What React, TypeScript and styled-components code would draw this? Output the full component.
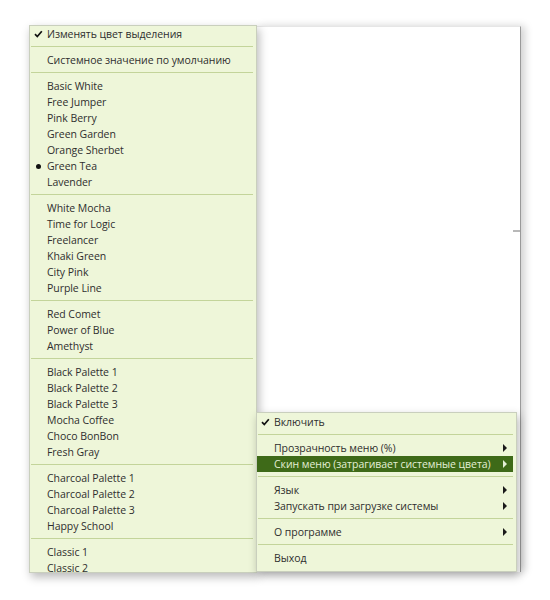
import React from "react";
import styled, { createGlobalStyle } from "styled-components";

const GlobalStyle = createGlobalStyle`
  html, body {
    margin: 0;
    padding: 0;
    background: #ffffff;
  }
  body {
    font-family: "Open Sans", "Noto Sans", sans-serif;
  }
`;

const Desktop = styled.div`
  position: relative;
  width: 550px;
  height: 600px;
  overflow: hidden;
  background: #ffffff;
`;

const AppWindow = styled.div`
  position: absolute;
  left: 256px;
  top: 26px;
  width: 265px;
  height: 546px;
  background: #ffffff;
  border-left: 1px solid #5a5a5a;
  border-right: 1px solid #9a9a9a;
  border-top: 1px solid #e6e6e6;
  box-shadow: 4px 0 8px rgba(0, 0, 0, 0.18);
  display: flex;
  flex-direction: column;
  align-items: flex-end;
  padding-top: 203px;
  box-sizing: border-box;
`;

const ScrollTick = styled.div`
  width: 7px;
  height: 2px;
  background: #b8b8b8;
`;

const MenuPanel = styled.div<{ $left: number; $top: number; $width: number; $height: number; $pad?: number }>`
  position: absolute;
  left: ${(p) => p.$left}px;
  top: ${(p) => p.$top}px;
  width: ${(p) => p.$width}px;
  height: ${(p) => p.$height}px;
  padding-top: ${(p) => p.$pad ?? 0}px;
  box-sizing: border-box;
  background: #eef6d9;
  border: 1px solid #c9cfbd;
  box-shadow: 2px 4px 9px rgba(0, 0, 0, 0.28);
  overflow: hidden;
  display: flex;
  flex-direction: column;
`;

const Item = styled.div<{ $active?: boolean }>`
  flex: none;
  display: flex;
  align-items: center;
  height: 16px;
  line-height: 16px;
  padding-left: 4px;
  margin-right: 3px;
  font-size: 10.5px;
  letter-spacing: -0.05px;
  color: ${(p) => (p.$active ? "#e4efd6" : "#2e2e2e")};
  background: ${(p) => (p.$active ? "#3e6a18" : "transparent")};
  white-space: nowrap;
`;

const Separator = styled.div`
  flex: none;
  height: 1px;
  margin: 4px 3px 5px 1px;
  background: #c3d49a;
`;

const Mark = styled.span`
  flex: none;
  width: 13px;
  display: flex;
  align-items: center;
`;

const Bullet = styled.span`
  display: block;
  width: 5px;
  height: 5px;
  margin-left: 2px;
  border-radius: 50%;
  background: #111;
`;

const Arrow = styled.span<{ $light?: boolean }>`
  flex: none;
  margin-left: auto;
  margin-right: 6px;
  width: 0;
  height: 0;
  border-top: 4px solid transparent;
  border-bottom: 4px solid transparent;
  border-left: 4px solid ${(p) => (p.$light ? "#e4efd6" : "#1a1a1a")};
`;

const Check = () => (
  <svg width="9" height="8" viewBox="0 0 9 8">
    <path d="M1 4.2 L3.3 6.6 L7.8 1.2" fill="none" stroke="#111" strokeWidth="1.7" />
  </svg>
);

type Entry =
  | { sep: true }
  | { label: string; mark?: "check" | "bullet"; sub?: boolean; active?: boolean };

const skins: Entry[] = [
  { label: "Изменять цвет выделения", mark: "check" },
  { sep: true },
  { label: "Системное значение по умолчанию" },
  { sep: true },
  { label: "Basic White" },
  { label: "Free Jumper" },
  { label: "Pink Berry" },
  { label: "Green Garden" },
  { label: "Orange Sherbet" },
  { label: "Green Tea", mark: "bullet" },
  { label: "Lavender" },
  { sep: true },
  { label: "White Mocha" },
  { label: "Time for Logic" },
  { label: "Freelancer" },
  { label: "Khaki Green" },
  { label: "City Pink" },
  { label: "Purple Line" },
  { sep: true },
  { label: "Red Comet" },
  { label: "Power of Blue" },
  { label: "Amethyst" },
  { sep: true },
  { label: "Black Palette 1" },
  { label: "Black Palette 2" },
  { label: "Black Palette 3" },
  { label: "Mocha Coffee" },
  { label: "Choco BonBon" },
  { label: "Fresh Gray" },
  { sep: true },
  { label: "Charcoal Palette 1" },
  { label: "Charcoal Palette 2" },
  { label: "Charcoal Palette 3" },
  { label: "Happy School" },
  { sep: true },
  { label: "Classic 1" },
  { label: "Classic 2" },
];

const tray: Entry[] = [
  { label: "Включить", mark: "check" },
  { sep: true },
  { label: "Прозрачность меню (%)", sub: true },
  { label: "Скин меню (затрагивает системные цвета)", sub: true, active: true },
  { sep: true },
  { label: "Язык", sub: true },
  { label: "Запускать при загрузке системы", sub: true },
  { sep: true },
  { label: "О программе", sub: true },
  { sep: true },
  { label: "Выход" },
];

const MenuItems: React.FC<{ entries: Entry[] }> = ({ entries }) => (
  <>
    {entries.map((e, i) =>
      "sep" in e ? (
        <Separator key={i} />
      ) : (
        <Item key={i} $active={e.active}>
          <Mark>{e.mark === "check" ? <Check /> : e.mark === "bullet" ? <Bullet /> : null}</Mark>
          {e.label}
          {e.sub && <Arrow $light={e.active} />}
        </Item>
      )
    )}
  </>
);

const App: React.FC = () => (
  <>
    <GlobalStyle />
    <Desktop>
      <AppWindow>
        <ScrollTick />
      </AppWindow>
      <MenuPanel $left={29} $top={25} $width={228} $height={548}>
        <MenuItems entries={skins} />
      </MenuPanel>
      <MenuPanel $left={256} $top={412} $width={261} $height={160} $pad={1}>
        <MenuItems entries={tray} />
      </MenuPanel>
    </Desktop>
  </>
);

export default App;
